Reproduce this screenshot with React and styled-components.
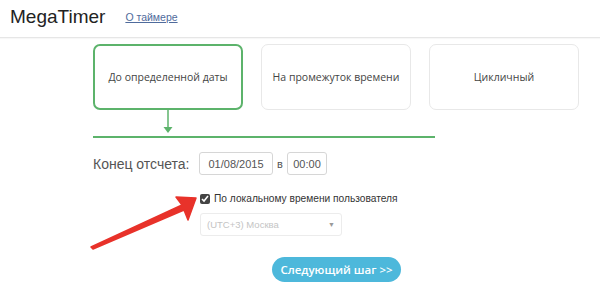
import React from "react";
import styled, { createGlobalStyle } from "styled-components";

const Global = createGlobalStyle`
  body {
    margin: 0;
    background: #fff;
    font-family: "Liberation Sans", Arial, sans-serif;
    color: #555;
  }
`;

const Page = styled.div`
  position: relative;
  width: 600px;
  height: 302px;
  overflow: hidden;
`;

const Header = styled.header`
  height: 37px;
  display: flex;
  align-items: center;
  padding-left: 10px;
  border-bottom: 1px solid #e6e6e6;
  box-shadow: 0 1px 1px rgba(0, 0, 0, 0.03);
`;

const Logo = styled.div`
  font-size: 19px;
  color: #222;
  margin-right: 20px;
  margin-top: -4px;
`;

const NavLink = styled.a`
  font-size: 10.5px;
  color: #4f6b9c;
  text-decoration: underline;
  margin-top: -4px;
`;

const Main = styled.main`
  padding: 6px 0 0 93px;
`;

const Cards = styled.div`
  display: flex;
  gap: 18px;
`;

const Card = styled.div`
  width: 150px;
  height: 66px;
  box-sizing: border-box;
  border: ${(p) => (p.$active ? "2px solid #5cb36b" : "1px solid #e8e8e8")};
  border-radius: 7px;
  display: flex;
  align-items: center;
  justify-content: center;
  font-family: "Open Sans", sans-serif;
  font-size: 10.5px;
  color: #444;
`;

const Pointer = styled.div`
  width: 150px;
  display: flex;
  justify-content: center;
  height: 26px;
`;

const Track = styled.div`
  width: 342px;
  height: 2px;
  background: #5cb36b;
`;

const Form = styled.div`
  width: 342px;
  padding-top: 14px;
  display: flex;
  flex-direction: column;
`;

const Row = styled.div`
  display: flex;
  align-items: center;
`;

const Label = styled.span`
  font-size: 14px;
  color: #555;
  width: 106px;
`;

const Field = styled.div`
  height: 23px;
  box-sizing: border-box;
  border: 1px solid #d6d6d6;
  border-radius: 3px;
  display: flex;
  align-items: center;
  justify-content: center;
  width: ${(p) => p.$w}px;
  font-size: 11px;
  color: #555;
`;

const Sep = styled.span`
  font-size: 11px;
  width: 14px;
  text-align: center;
`;

const Options = styled.div`
  margin-left: 107px;
  margin-top: 18px;
  display: flex;
  flex-direction: column;
  gap: 9px;
`;

const Check = styled.label`
  display: flex;
  align-items: center;
  gap: 4px;
  font-size: 10.2px;
  color: #333;
  input {
    width: 10px;
    height: 10px;
    margin: 0;
    accent-color: #444;
  }
`;

const Select = styled.div`
  width: 142px;
  height: 23px;
  box-sizing: border-box;
  border: 1px solid #ececec;
  border-radius: 3px;
  display: flex;
  align-items: center;
  justify-content: space-between;
  padding: 0 6px;
  font-size: 9.5px;
  color: #c4c4c4;
`;

const Caret = styled.span`
  font-size: 7px;
  color: #999;
`;

const Button = styled.button`
  align-self: flex-start;
  margin: 21px 0 0 179px;
  width: 129px;
  height: 25px;
  border: none;
  border-radius: 13px;
  background: #4db8db;
  color: #fff;
  font-family: "Open Sans", sans-serif;
  font-weight: 600;
  font-size: 11.5px;
  padding: 0;
`;

const Annotation = styled.svg`
  position: absolute;
  left: 0;
  top: 0;
  pointer-events: none;
`;

export default function App() {
  return (
    <Page>
      <Global />
      <Header>
        <Logo>MegaTimer</Logo>
        <NavLink href="#">О таймере</NavLink>
      </Header>
      <Main>
        <Cards>
          <Card $active>До определенной даты</Card>
          <Card>На промежуток времени</Card>
          <Card>Цикличный</Card>
        </Cards>
        <Pointer>
          <svg width="12" height="26" viewBox="0 0 12 26">
            <line x1="6" y1="0" x2="6" y2="20" stroke="#5cb36b" strokeWidth="1.5" />
            <path d="M1.5 17 L6 23 L10.5 17 Z" fill="#5cb36b" />
          </svg>
        </Pointer>
        <Track />
        <Form>
          <Row>
            <Label>Конец отсчета:</Label>
            <Field $w={74}>01/08/2015</Field>
            <Sep>в</Sep>
            <Field $w={40}>00:00</Field>
          </Row>
          <Options>
            <Check>
              <input type="checkbox" defaultChecked />
              По локальному времени пользователя
            </Check>
            <Select>
              <span>(UTC+3) Москва</span>
              <Caret>▼</Caret>
            </Select>
          </Options>
          <Button>Следующий шаг &gt;&gt;</Button>
        </Form>
      </Main>
      <Annotation width="600" height="302">
        <path
          d="M91 247 L182 205 L176 197 L196 198 L188 220 L184 210 L93 249 Z"
          fill="#e8322a"
          stroke="#e8322a"
          strokeWidth="1.5"
          strokeLinejoin="round"
        />
      </Annotation>
    </Page>
  );
}
